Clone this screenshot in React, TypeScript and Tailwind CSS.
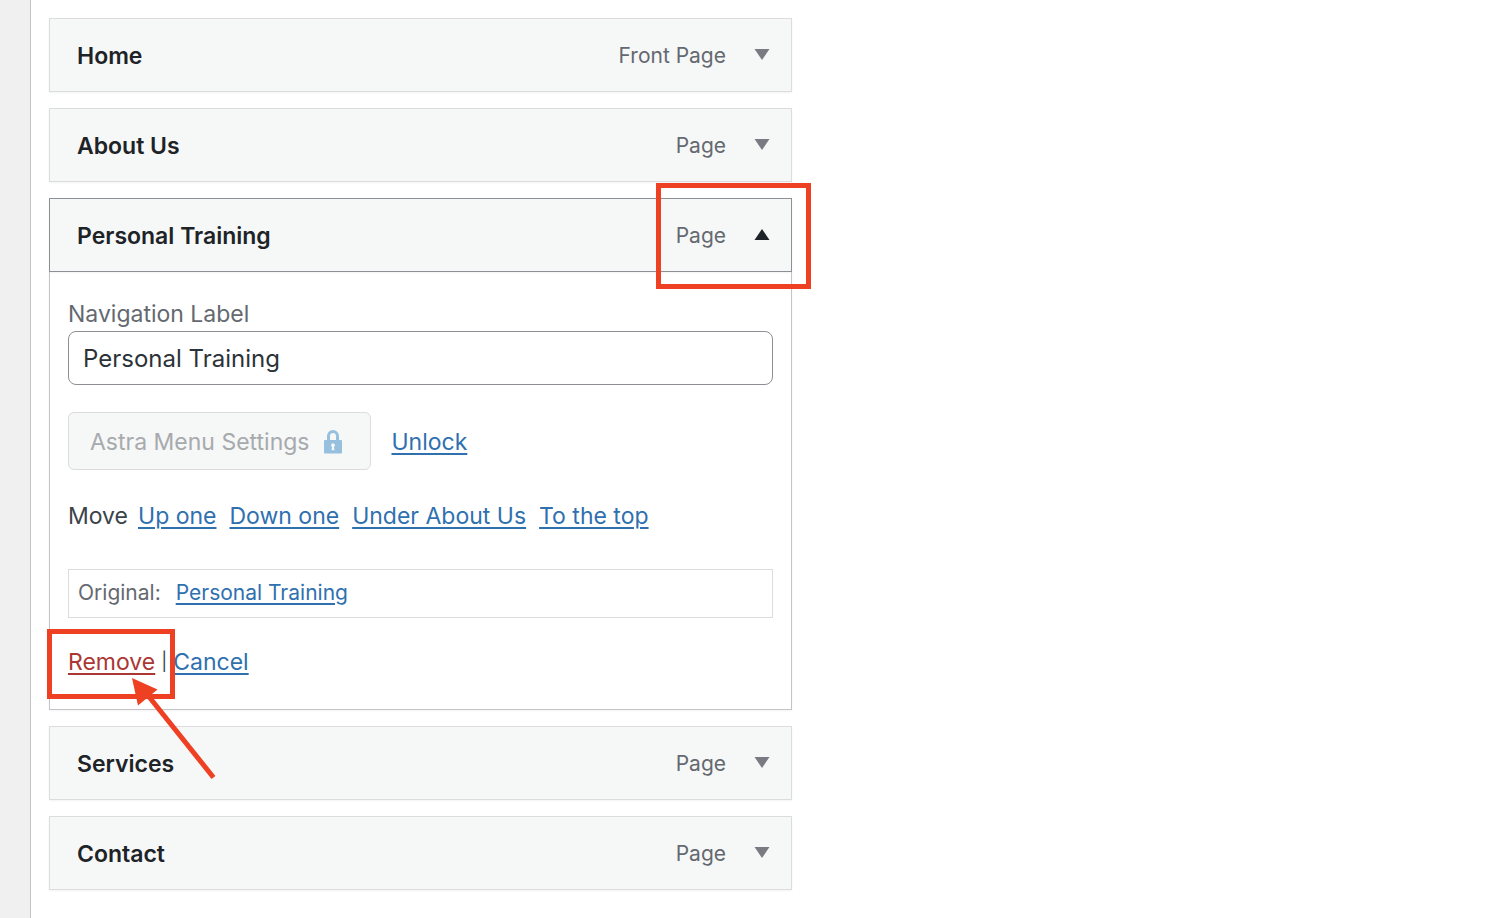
import { useState } from 'react';
import clsx from 'clsx';

interface MenuItem {
    id: string;
    title: string;
    type: string;
}

const beforeItems: MenuItem[] = [
    { id: 'home', title: 'Home', type: 'Front Page' },
    { id: 'about', title: 'About Us', type: 'Page' },
];

const afterItems: MenuItem[] = [
    { id: 'services', title: 'Services', type: 'Page' },
    { id: 'contact', title: 'Contact', type: 'Page' },
];

const moveLinks = ['Up one', 'Down one', 'Under About Us', 'To the top'];

const linkClass = 'text-[#2f70af] underline decoration-2 underline-offset-3';

function LockIcon() {
    return (
        <svg width="18" height="24" viewBox="0 0 18 24" aria-hidden="true">
            <path d="M4.500 11V6a4.500 4.500 0 0 1 9 0V11" fill="none" stroke="#97c0df" strokeWidth="3" />
            <path
                fillRule="evenodd"
                fill="#97c0df"
                d="M1 10h16a1 1 0 0 1 1 1v11.5a1 1 0 0 1-1 1H1a1 1 0 0 1-1-1V11a1 1 0 0 1 1-1zM9 13.2a2 2 0 0 0-1 3.7l-.5 3.3h3l-.5-3.3a2 2 0 0 0-1-3.7z"
            />
        </svg>
    );
}

function ItemBar({ item, open = false }: { item: MenuItem; open?: boolean }) {
    return (
        <div
            className={clsx(
                'flex h-[74px] items-center justify-between border bg-[#f6f7f7] pr-[21px] pl-[27px] shadow-[0_1px_2px_rgba(0,0,0,0.05)]',
                open ? 'border-[#8c8f94]' : 'border-[#dcdcde]'
            )}
        >
            <h3 className="pt-0.5 text-[23px] leading-7 font-semibold text-[#1d2327]">{item.title}</h3>
            <div className="flex items-center gap-7">
                <span className="pt-0.5 text-[21px] leading-7 text-[#646970]">{item.type}</span>
                <button type="button" aria-label={`Edit ${item.title}`} aria-expanded={open}>
                    <svg width="16" height="12" viewBox="0 0 16 12" aria-hidden="true">
                        {open ? (
                            <path d="M8 0L15.500 11H.5z" fill="#1d2327" />
                        ) : (
                            <path d="M.5 0h15L8 11z" fill="#787c82" />
                        )}
                    </svg>
                </button>
            </div>
        </div>
    );
}

function ItemSettings() {
    const [label, setLabel] = useState('Personal Training');

    return (
        <div className="border border-t-0 border-[#c3c4c7] px-[18px] pt-7 pb-[33px] text-[23px] leading-7 text-[#3c434a] shadow-[0_1px_2px_rgba(0,0,0,0.05)]">
            <label htmlFor="nav-label" className="block text-[#646970]">
                Navigation Label
            </label>
            <input
                id="nav-label"
                type="text"
                value={label}
                onChange={(e) => setLabel(e.target.value)}
                className="mt-[3px] block h-[54px] w-full rounded-lg border border-[#8c8f94] bg-white px-3.5 text-[24px] text-[#2c3338]"
            />

            <div className="mt-[27px] flex items-center gap-5">
                <button
                    type="button"
                    disabled
                    className="flex h-[58px] items-center gap-[15px] rounded-md border border-[#dcdcde] bg-[#f6f7f7] pt-0.5 pr-7 pl-[21px] text-[#a7aaad]"
                >
                    Astra Menu Settings
                    <LockIcon />
                </button>
                <a href="#unlock" className={clsx(linkClass, 'pt-0.5')}>Unlock</a>
            </div>

            <div className="mt-8 flex gap-[13px]">
                <span className="-mr-[3px]">Move</span>
                {moveLinks.map((text) => (
                    <a key={text} href="#move" className={linkClass}>{text}</a>
                ))}
            </div>

            <p className="mt-[39px] flex h-[49px] items-center gap-[15px] border border-[#dcdcde] px-[9px] pb-0.5 text-[21px] text-[#646970]">
                Original:
                <a href="#original" className={linkClass}>Personal Training</a>
            </p>

            <div className="mt-[30px] flex gap-1.5">
                {/* Remove is called out with a frame and an arrow */}
                <div className="relative">
                    <a href="#remove" className="text-[#ab3732] underline decoration-2 underline-offset-3">Remove</a>
                    <div className="pointer-events-none absolute -top-[19px] -left-[21px] z-10 h-[70px] w-32 border-5 border-[#ee4023]" />
                    <svg
                        className="pointer-events-none absolute top-7 left-16 z-20"
                        width="86"
                        height="104"
                        viewBox="0 0 86 104"
                        aria-hidden="true"
                    >
                        <path d="M14 17L81.500 101.500" stroke="#ee4023" strokeWidth="5" />
                        <path d="M0 2L25.500 13.500L6 29.500z" fill="#ee4023" />
                    </svg>
                </div>
                <span className="text-[18px]">|</span>
                <a href="#cancel" className={linkClass}>Cancel</a>
            </div>
        </div>
    );
}

export default function App() {
    return (
        <div className="flex min-h-screen bg-white font-['Inter',sans-serif]">
            <div className="w-[31px] shrink-0 border-r border-[#c3c4c7] bg-[#f0f0f1]" />
            <main className="min-w-0 flex-1 px-[18px] pt-[18px] pb-7">
                <ul className="flex max-w-[743px] flex-col gap-4">
                    {beforeItems.map((item) => (
                        <li key={item.id}><ItemBar item={item} /></li>
                    ))}
                    <li className="relative">
                        <ItemBar item={{ id: 'training', title: 'Personal Training', type: 'Page' }} open />
                        <ItemSettings />
                        <div className="pointer-events-none absolute -top-[15px] -right-[19px] h-[106px] w-[155px] border-5 border-[#ee4023]" />
                    </li>
                    {afterItems.map((item) => (
                        <li key={item.id}><ItemBar item={item} /></li>
                    ))}
                </ul>
            </main>
        </div>
    );
}
